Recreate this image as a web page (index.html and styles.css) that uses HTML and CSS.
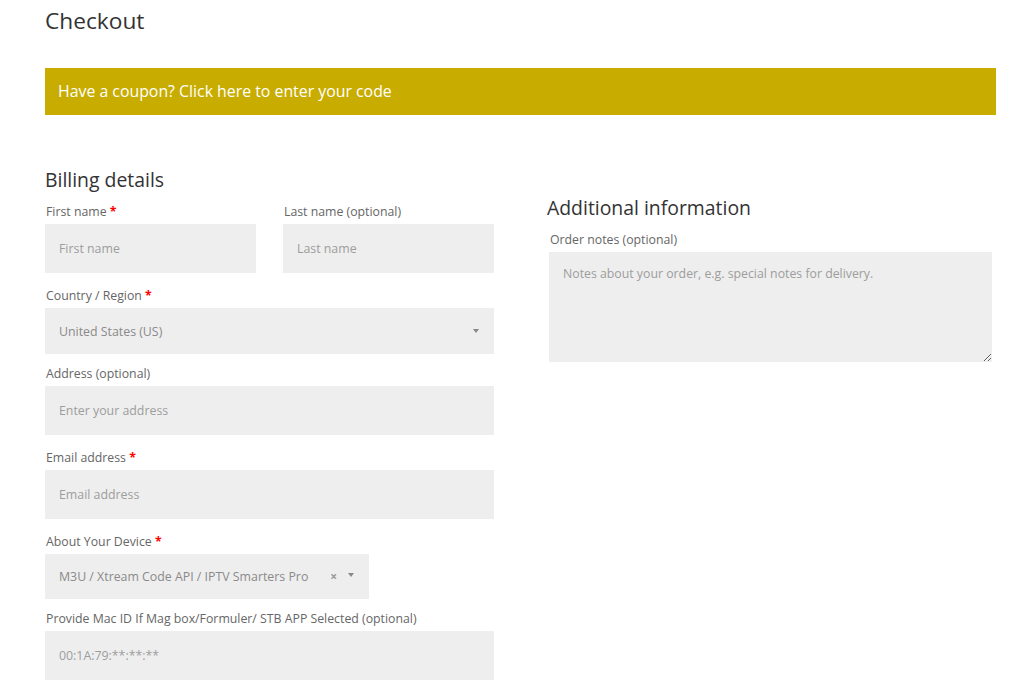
FILE: index.html
```html
<!DOCTYPE html>
<html lang="en">
<head>
<meta charset="utf-8">
<title>Checkout</title>
<link rel="stylesheet" href="styles.css">
</head>
<body>
<div class="page">
  <h1 class="title">Checkout</h1>
  <div class="coupon">Have a coupon? <a class="coupon-link" href="#">Click here to enter your code</a></div>
  <form class="checkout">
    <div class="col col-billing">
      <h3 class="section-title">Billing details</h3>
      <div class="fields">
        <div class="pair">
          <div class="row">
            <label class="label">First name <span class="req">*</span></label>
            <input class="field" type="text" placeholder="First name">
          </div>
          <div class="row">
            <label class="label">Last name <span class="opt">(optional)</span></label>
            <input class="field" type="text" placeholder="Last name">
          </div>
        </div>
        <div class="row row-select">
          <label class="label">Country / Region <span class="req">*</span></label>
          <div class="select">
            <span class="select-value">United States (US)</span>
            <span class="arrow"></span>
          </div>
        </div>
        <div class="row">
          <label class="label">Address <span class="opt">(optional)</span></label>
          <input class="field" type="text" placeholder="Enter your address">
        </div>
        <div class="row">
          <label class="label">Email address <span class="req">*</span></label>
          <input class="field" type="text" placeholder="Email address">
        </div>
        <div class="row row-select">
          <label class="label">About Your Device <span class="req">*</span></label>
          <div class="select select-device">
            <span class="select-value">M3U / Xtream Code API / IPTV Smarters Pro</span>
            <span class="clear">×</span>
            <span class="arrow"></span>
          </div>
        </div>
        <div class="row">
          <label class="label">Provide Mac ID If Mag box/Formuler/ STB APP Selected <span class="opt">(optional)</span></label>
          <input class="field" type="text" placeholder="00:1A:79:**:**:**">
        </div>
      </div>
    </div>
    <div class="col col-additional">
      <h3 class="section-title">Additional information</h3>
      <div class="fields fields-right">
        <div class="row">
          <label class="label">Order notes <span class="opt">(optional)</span></label>
          <textarea class="notes" placeholder="Notes about your order, e.g. special notes for delivery."></textarea>
        </div>
      </div>
    </div>
  </form>
</div>
</body>
</html>
```

FILE: styles.css
```css
html, body {
  margin: 0;
  padding: 0;
  background: #ffffff;
}

body {
  font-family: "Open Sans", "DejaVu Sans", sans-serif;
  color: #333333;
}

.page {
  margin-left: 45px;
  width: 951px;
  padding-top: 6px;
}

.title {
  margin: 0;
  font-size: 22.7px;
  line-height: 30px;
  font-weight: 400;
  color: #333333;
}

.coupon {
  margin-top: 32px;
  height: 47px;
  line-height: 47px;
  background: #c8ad00;
  color: #ffffff;
  font-size: 15.85px;
  padding-left: 13px;
}

.coupon-link {
  color: #ffffff;
  text-decoration: none;
}

.checkout {
  display: grid;
  grid-template-columns: 449px 449px;
  column-gap: 53px;
  margin-top: 52px;
  align-items: start;
}

.section-title {
  margin: 0;
  font-size: 19.4px;
  line-height: 26px;
  font-weight: 400;
  color: #333333;
}

.col-additional .section-title {
  margin-top: 27.5px;
}

.fields {
  margin-top: 10px;
}

.fields-right {
  padding-left: 2px;
  padding-right: 4px;
}

.pair {
  display: grid;
  grid-template-columns: 1fr 1fr;
  column-gap: 27px;
}

.row {
  margin-bottom: 14px;
}

.row-select {
  margin-bottom: 11px;
}

.label {
  display: block;
  padding-left: 1px;
  font-size: 12.3px;
  line-height: 18px;
  color: #666666;
  margin-bottom: 3px;
}

.req {
  color: #ff0000;
  font-weight: 700;
}

.field {
  display: block;
  width: 100%;
  height: 49px;
  box-sizing: border-box;
  margin: 0;
  padding: 0 13px 0 14px;
  border: 0;
  outline: none;
  background: #eeeeee;
  font-family: "Open Sans", "DejaVu Sans", sans-serif;
  font-size: 12.35px;
  color: #555555;
}

.field::placeholder,
.notes::placeholder {
  color: #9d9d9d;
  opacity: 1;
}

.select {
  display: flex;
  align-items: center;
  height: 45.5px;
  box-sizing: border-box;
  padding: 1px 15px 0 14px;
  background: #eeeeee;
  font-size: 12.35px;
  color: #8a8a8a;
}

.select-device {
  width: 324px;
}

.select-value {
  flex: 1;
  white-space: nowrap;
}

.clear {
  font-size: 12px;
  font-weight: 700;
  color: #999999;
  margin-right: 11px;
  line-height: 1;
}

.arrow {
  width: 0;
  height: 0;
  border-left: 3px solid transparent;
  border-right: 3px solid transparent;
  border-top: 4px solid #888888;
}

.select-device .arrow {
  margin-top: -3px;
}

.notes {
  display: block;
  width: 443px;
  height: 110px;
  box-sizing: border-box;
  margin: 0;
  padding: 13px 14px;
  border: 0;
  outline: none;
  background: #eeeeee;
  font-family: "Open Sans", "DejaVu Sans", sans-serif;
  font-size: 12.3px;
  line-height: 18px;
  color: #555555;
  resize: vertical;
}
```
